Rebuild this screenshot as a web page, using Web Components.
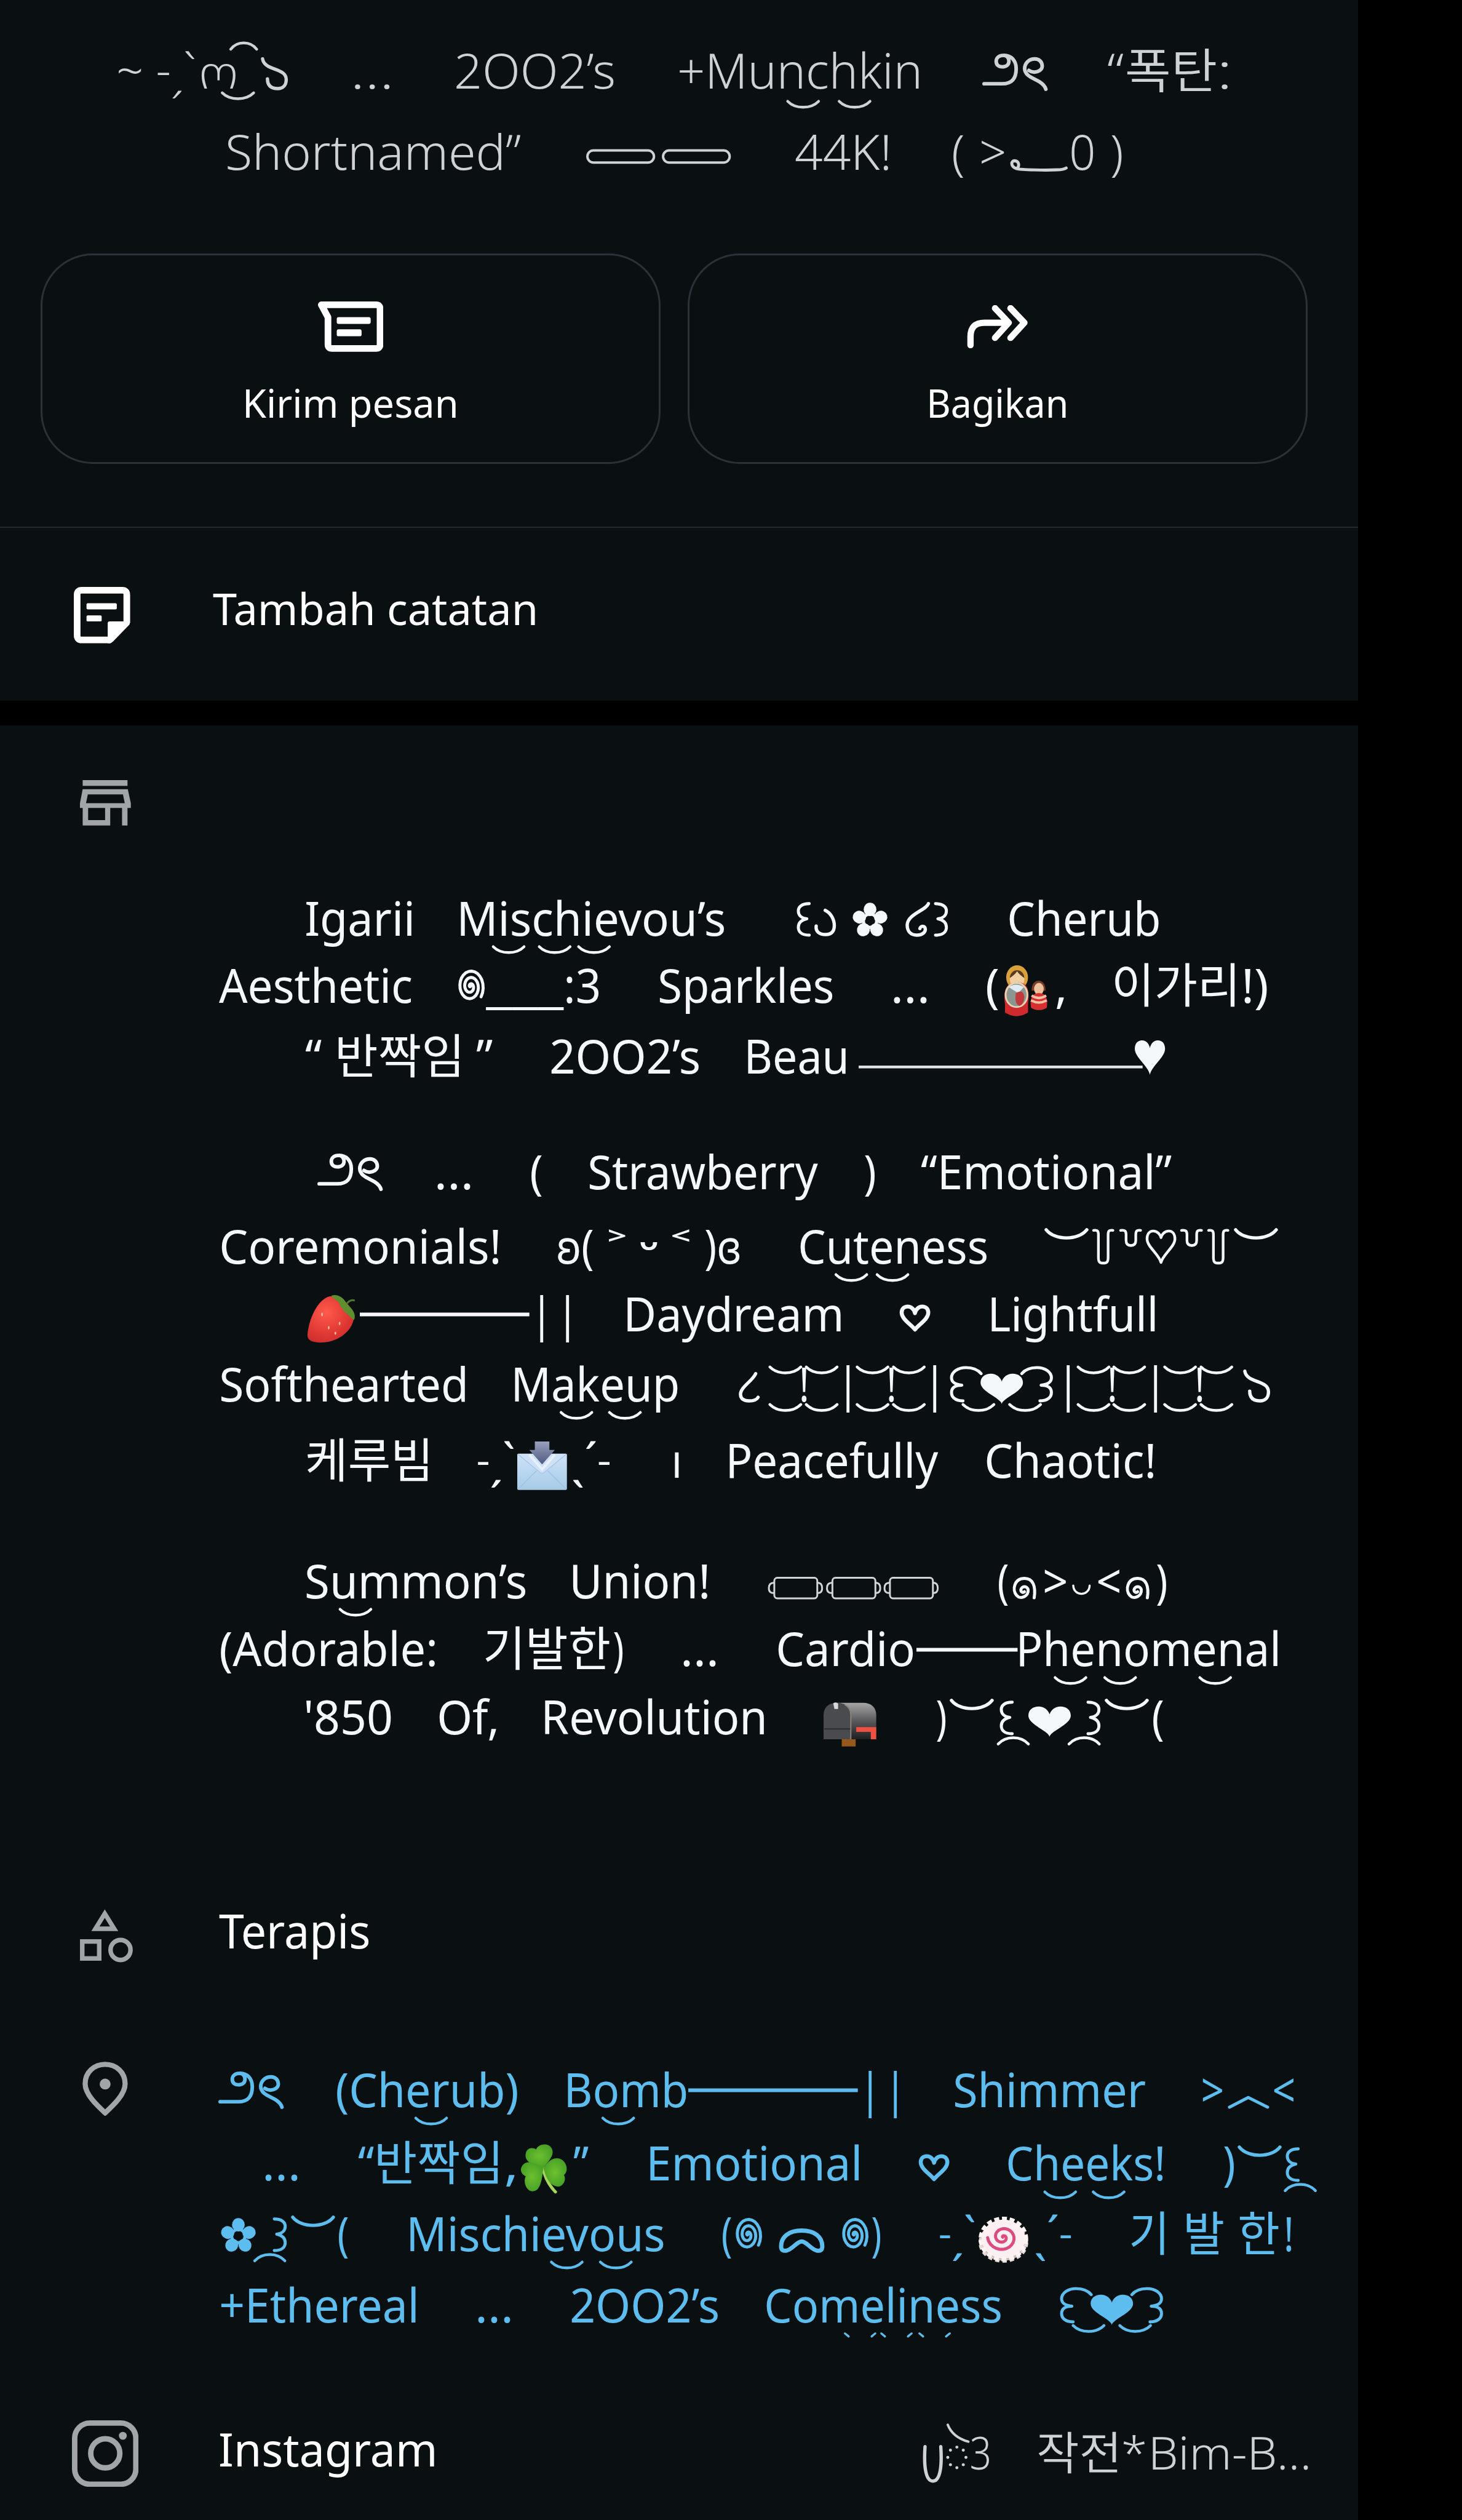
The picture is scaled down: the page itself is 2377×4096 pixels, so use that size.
<!DOCTYPE html>
<html lang="id">
<head>
<meta charset="utf-8">
<title>Info kontak</title>
<style>
    :root {
        /* one design unit */
        --u: 0.98467px;
    }
    html, body {
        margin: 0;
        background: #000;
    }
    body {
        font-family: "Noto Sans", "Noto Sans CJK KR", "DejaVu Sans", sans-serif;
        color: #f5f8fb;
        overflow: hidden;
    }
</style>
</head>
<body>

<profile-page>
    <profile-panel>
        <profile-bio>
            <text-line size="80" h="134" arcs="381:-66:cap:43 367:6:smile:52 1301:20 1386:20">
                <t-run at="196,233">~</t-run>
                <t-run at="260,321">˗ˏˋ</t-run>
                <t-run at="332,389">ო</t-run>
                <t-mark at="432,475" kind="hookR"></t-mark>
                <t-run at="586,644">...</t-run>
                <t-run at="754,1014">2OO2’s</t-run>
                <t-run at="1122,1517">+Munchkin</t-run>
                <t-mark at="1623,1730" kind="bow"></t-mark>
                <t-run at="1829,1855">“</t-run>
                <t-run at="1862,2008">폭탄</t-run>
                <t-run at="2017,2028">:</t-run>
            </text-line>
            <text-line size="80" h="134">
                <t-run at="376,860">Shortnamed”</t-run>
                <t-mark at="968,1207" kind="pills"></t-mark>
                <t-run at="1313,1467">44K!</t-run>
                <t-run at="1574,1591">(</t-run>
                <t-run at="1621,1658">&gt;</t-run>
                <t-mark at="1667,1762" kind="tail"></t-mark>
                <t-run at="1769,1805">0</t-run>
                <t-run at="1835,1852">)</t-run>
            </text-line>
        </profile-bio>

        <action-bar>
            <action-button icon="message" label="Kirim pesan" width="346"></action-button>
            <action-button icon="share" label="Bagikan" width="224"></action-button>
        </action-bar>

        <detail-row class="note">
            <row-icon slot="icon" name="note"></row-icon>
            <text-line size="72" h="150" origin="350">
                <t-run at="351.5,884">Tambah catatan</t-run>
            </text-line>
        </detail-row>
    </profile-panel>

    <profile-panel>
        <detail-row class="about">
            <row-icon slot="icon" name="store"></row-icon>
            <text-line size="78.5" h="111.4" origin="360" arcs="815:18 891:18 956:18">
                <t-run at="506,680">Igarii</t-run>
                <t-run at="761,1196">Mischievou’s</t-run>
                <t-mark at="1317,1337" kind="braceL"></t-mark>
                <t-mark at="1345,1380" kind="earL"></t-mark>
                <t-mark at="1408,1466" kind="flower"></t-mark>
                <t-mark at="1496,1534" kind="earR"></t-mark>
                <t-mark at="1544,1564" kind="braceR"></t-mark>
                <t-run at="1667,1914">Cherub</t-run>
            </text-line>
            <text-line size="78.5" h="117" origin="360">
                <t-run at="362,680">Aesthetic</t-run>
                <t-mark at="756,799" kind="spiral"></t-mark>
                <t-run at="801,931">___</t-run>
                <t-run at="935,988">:3</t-run>
                <t-run at="1089,1375">Sparkles</t-run>
                <t-run at="1476,1531">...</t-run>
                <t-run at="1630,1648">(</t-run>
                <t-mark at="1658,1732" kind="dolls"></t-mark>
                <t-run at="1745,1757">,</t-run>
                <t-run at="1841,2039">이가리</t-run>
                <t-run at="2055,2093">!)</t-run>
            </text-line>
            <text-line size="78.5" h="190" origin="360">
                <t-run at="504,531">“</t-run>
                <t-run at="559,759">반짝임</t-run>
                <t-run at="786,813">”</t-run>
                <t-run at="910,1154">2OO2’s</t-run>
                <t-run at="1235,1397">Beau</t-run>
                <t-mark at="1418,1887" kind="ruleLow"></t-mark>
                <t-mark at="1874,1924" kind="heartTall"></t-mark>
            </text-line>

            <text-line size="78.5" h="123" origin="360">
                <t-mark at="525,627" kind="bow"></t-mark>
                <t-run at="722,777">...</t-run>
                <t-run at="878,895">(</t-run>
                <t-run at="973,1351">Strawberry</t-run>
                <t-run at="1428,1445">)</t-run>
                <t-run at="1520,1934">“Emotional”</t-run>
            </text-line>
            <text-line size="78.5" h="112" origin="360" arcs="1381:18 1449:18">
                <t-run at="366,824">Coremonials!</t-run>
                <t-run at="921.5,979">ʚ(</t-run>
                <t-run class="bold low" at="1004,1033">˃</t-run>
                <t-run class="bold" at="1057,1085">ᵕ</t-run>
                <t-run class="bold low" at="1109,1139">˂</t-run>
                <t-run at="1165,1221">)ɞ</t-run>
                <t-run at="1321,1629">Cuteness</t-run>
                <t-mark at="1726,1797" kind="crescent"></t-mark>
                <t-mark at="1805,1839" kind="toothLong"></t-mark>
                <t-mark at="1849,1884" kind="toothShort"></t-mark>
                <t-mark at="1892,1942" kind="heartOutline"></t-mark>
                <t-mark at="1950,1985" kind="toothShort"></t-mark>
                <t-mark at="1995,2029" kind="toothLong"></t-mark>
                <t-mark at="2038,2109" kind="crescent"></t-mark>
            </text-line>
            <text-line size="78.5" h="116" origin="360">
                <t-mark at="507,587" kind="strawberry"></t-mark>
                <t-mark at="594,874" kind="rule"></t-mark>
                <t-run at="892,898">|</t-run>
                <t-run at="934.5,940.5">|</t-run>
                <t-run at="1036,1388">Daydream</t-run>
                <t-mark at="1486,1536" kind="heartSmall"></t-mark>
                <t-run at="1637,1907">Lightfull</t-run>
            </text-line>
            <text-line size="78.5" h="125.5" origin="360" arcs="927:18 1007:18 1272:-57 1332:-57 1416:-57 1476:-57 1781:-57 1840:-57 1924:-57 1984:-57 1272:5 1332:5 1416:5 1476:5 1781:5 1840:5 1924:5 1984:5">
                <t-run at="365,768">Softhearted</t-run>
                <t-run at="850,1119">Makeup</t-run>
                <t-mark at="1221,1253" kind="hook"></t-mark>
                <t-run at="1323,1332">!</t-run>
                <t-run at="1397,1403">|</t-run>
                <t-run at="1468,1477">!</t-run>
                <t-run at="1541,1547">|</t-run>
                <t-mark at="1570,1737" kind="butterfly"></t-mark>
                <t-run at="1761,1767">|</t-run>
                <t-run at="1832,1841">!</t-run>
                <t-run at="1905,1911">|</t-run>
                <t-run at="1976,1985">!</t-run>
                <t-mark at="2054,2096" kind="hookR"></t-mark>
            </text-line>
            <text-line size="78.5" h="199.5" origin="360">
                <t-run at="508,707">케루빔</t-run>
                <t-run at="789,848">˗ˏˋ</t-run>
                <t-mark at="854,936" kind="envelope"></t-mark>
                <t-run at="947,1007">ˎˊ˗</t-run>
                <t-run at="1114.5,1121.5">ı</t-run>
                <t-run at="1205,1550">Peacefully</t-run>
                <t-run at="1629,1905">Chaotic!</t-run>
            </text-line>

            <text-line size="78.5" h="112" origin="360" arcs="562:18">
                <t-run at="506,868">Summon’s</t-run>
                <t-run at="946,1169">Union!</t-run>
                <t-mark at="1268,1549" kind="frames"></t-mark>
                <t-run at="1649,1664">(</t-run>
                <t-mark at="1672,1712" kind="curl"></t-mark>
                <t-run at="1725,1761">&gt;</t-run>
                <t-mark at="1771,1801" kind="cup"></t-mark>
                <t-run at="1813,1849">&lt;</t-run>
                <t-mark at="1859,1899" kind="curl"></t-mark>
                <t-run at="1910,1926">)</t-run>
            </text-line>
            <text-line size="78.5" h="112" origin="360" arcs="1743:18 1825:18 1982:18">
                <t-run at="365,719">(Adorable:</t-run>
                <t-run at="801,1006">기발한</t-run>
                <t-run at="1014,1029">)</t-run>
                <t-run at="1128,1182">...</t-run>
                <t-run at="1285,1508">Cardio</t-run>
                <t-mark at="1513,1680" kind="rule"></t-mark>
                <t-run at="1684,2110">Phenomenal</t-run>
            </text-line>
            <text-line size="78.5" h="354.5" origin="360" arcs="1649:16:cap 1766:16:cap">
                <t-run at="506,646">'850</t-run>
                <t-run at="725,819">Of,</t-run>
                <t-run at="900,1262">Revolution</t-run>
                <t-mark at="1359,1448" kind="mailbox"></t-mark>
                <t-run at="1547,1562">)</t-run>
                <t-mark at="1569,1640" kind="crescent"></t-mark>
                <t-mark at="1652,1672" kind="braceL"></t-mark>
                <t-mark at="1698,1768" kind="heart"></t-mark>
                <t-mark at="1796,1816" kind="braceR"></t-mark>
                <t-mark at="1825,1896" kind="crescent"></t-mark>
                <t-run at="1904,1920">(</t-run>
            </text-line>
        </detail-row>

        <detail-row class="category">
            <row-icon slot="icon" name="category"></row-icon>
            <text-line size="77" h="261" origin="360">
                <t-run at="362,609">Terapis</t-run>
            </text-line>
        </detail-row>

        <detail-row class="address">
            <row-icon slot="icon" name="pin"></row-icon>
            <text-line size="78.5" h="121.5" origin="360" arcs="687:18 996:18">
                <t-mark at="362,464" kind="bow"></t-mark>
                <t-run at="557,855">(Cherub)</t-run>
                <t-run at="937,1133">Bomb</t-run>
                <t-mark at="1136,1416" kind="rule"></t-mark>
                <t-run at="1434,1440">|</t-run>
                <t-run at="1476,1482">|</t-run>
                <t-run at="1576,1891">Shimmer</t-run>
                <t-run at="1986,2019">&gt;</t-run>
                <t-mark at="2028,2095" kind="hat"></t-mark>
                <t-run at="2103,2136">&lt;</t-run>
            </text-line>
            <text-line size="78.5" h="116.6" origin="360" arcs="1726:18 1806:18 2123:16:cap">
                <t-run at="438,492">...</t-run>
                <t-run at="591,617">“</t-run>
                <t-run at="624,823">반짝임</t-run>
                <t-run at="836,850">,</t-run>
                <t-mark at="859,936" kind="clover"></t-mark>
                <t-run at="947,972">”</t-run>
                <t-run at="1074,1419">Emotional</t-run>
                <t-mark at="1517,1567" kind="heartSmall"></t-mark>
                <t-run at="1665,1921">Cheeks!</t-run>
                <t-run at="2021,2038">)</t-run>
                <t-mark at="2045,2115" kind="crescent"></t-mark>
                <t-mark at="2125,2145" kind="braceL"></t-mark>
            </text-line>
            <text-line size="78.5" h="117.4" origin="360" arcs="911:18 992:18 421:16:cap">
                <t-mark at="365,423" kind="flower"></t-mark>
                <t-mark at="452,472" kind="braceR"></t-mark>
                <t-mark at="481,552" kind="crescent"></t-mark>
                <t-run at="560,575">(</t-run>
                <t-run at="677,1095">Mischievous</t-run>
                <t-run at="1193,1207">(</t-run>
                <t-mark at="1214,1257" kind="spiral"></t-mark>
                <t-mark at="1287,1361" kind="mask"></t-mark>
                <t-mark at="1389,1432" kind="spiral"></t-mark>
                <t-run at="1440,1454">)</t-run>
                <t-run at="1552,1609">˗ˏˋ</t-run>
                <t-mark at="1616,1699" kind="naruto"></t-mark>
                <t-run at="1710,1768">ˎˊ˗</t-run>
                <t-run at="1868,1923">기</t-run>
                <t-run at="1959,2020">발</t-run>
                <t-run at="2048,2112">한</t-run>
                <t-run at="2124,2133">!</t-run>
            </text-line>
            <text-line size="78.5" h="238.5" origin="360" arcs="1396:18:tips 1456:18:tips 1519:18:tips">
                <t-run at="365,687">+Ethereal</t-run>
                <t-run at="789,843">...</t-run>
                <t-run at="944,1186">2OO2’s</t-run>
                <t-run at="1265,1652">Comeliness</t-run>
                <t-mark at="1752,1919" kind="butterfly"></t-mark>
            </text-line>
        </detail-row>

        <detail-row class="social">
            <row-icon slot="icon" name="instagram"></row-icon>
            <text-line size="76" h="169" origin="360">
                <t-run at="364,717">Instagram</t-run>
            </text-line>
            <text-line class="handle" size="75" h="160" origin="717">
                <t-mark at="1525,1555" kind="deepCup"></t-mark>
                <t-mark at="1562,1602" kind="dotted"></t-mark>
                <t-run at="1604,1634">3</t-run>
                <t-run at="1714,1845">작전</t-run>
                <t-run at="1855,1891">*</t-run>
                <t-run at="1903,2160">Bim-B...</t-run>
            </text-line>
        </detail-row>
    </profile-panel>
</profile-page>

<script>
const LEAD = 102

const u = (n) => `calc(${n} * var(--u))`

/* Spiral path, from the centre outwards */
function spiralPath(cx, cy, rx, ry, turns, start) {
    let d = ''
    const steps = Math.round(turns * 24)
    for (let i = 0; i <= steps; i++) {
        const t = i / steps
        const a = start + t * turns * Math.PI * 2
        d += `${i ? 'L' : 'M'}${(cx + Math.cos(a) * rx * t).toFixed(1)} ${(cy + Math.sin(a) * ry * t).toFixed(1)}`
    }
    return d
}

const line = (d, w = 5.5) => `<path d="${d}" fill="none" stroke="currentColor" stroke-width="${w}" stroke-linecap="round" stroke-linejoin="round"/>`
const mirror = (w, body) => `<g transform="translate(${w} 0) scale(-1 1)">${body}</g>`
const smile = (x, y, w = 51) => line(`M${x} ${y}C${x + w * .25} ${y + 13} ${x + w * .75} ${y + 13} ${x + w} ${y}`, 4.5)
const cap = (x, y, w = 50) => line(`M${x} ${y}C${x + w * .25} ${y - 14} ${x + w * .75} ${y - 14} ${x + w} ${y}`, 4.5)
const tips = (x, y, w = 50) => line(`M${x} ${y}L${x + 6} ${y + 5}M${x + w} ${y}L${x + w - 6} ${y + 5}`, 3.5)

const BRACE = line('M19-53C6-53 1-47 1-41C1-34 6-29 15-28C6-26 1-21 1-14C1-7 6-1 19-1', 5)
const HEART = '<path d="M35 4C33-6 0-16 0-31C0-41 8-46 17-46C26-46 33-40 35-33C37-40 44-46 53-46C62-46 70-41 70-31C70-16 37-6 35 4Z" fill="currentColor"/>'
const WING = line('M20-1C6-1 1-8 1-15C1-22 6-27 18-27C6-28 1-33 1-39C1-49 12-56 25-56C37-56 45-52 50-46', 5)
const FRAME = '<rect x="10" y="-34" width="71" height="34" rx="5"/><path d="M10-26Q1-26 1-17T10-9M81-26Q89-26 89-17T81-9"/>'

/* Ornaments. y = 0 is the baseline of the line */
const MARKS = {
    bow: () => line('M2-9H32C50-9 55-20 55-34C55-48 46-56 35-56C27-56 22-52 22-46C22-40 26-37 32-37C38-37 43-40 43-46C43-52 40-55 35-56', 6)
        + line('M76-31C85-25 98-30 98-38C98-46 92-50 86-50C76-50 69-43 69-34C69-22 84-18 94-12C100-8 103-4 104 0', 6),
    pills: () => '<g fill="none" stroke="currentColor" stroke-width="4"><rect x="2" y="-33" width="110" height="20" rx="10"/><rect x="127" y="-33" width="110" height="20" rx="10"/></g>',
    tail: () => line('M12-3C2-6 2-16 9-16C17-15 17-6 12-3C20-1 60 0 78-1C87-1 91-2 94-4', 5),
    braceL: () => BRACE,
    braceR: () => mirror(20, BRACE),
    earL: () => line('M18-42C27-38 33-27 33-17C33-6 27-2 19-2C8-2 2-7 3-16'),
    earR: () => line('M37-53C33-42 3-36 2-18C2-7 8-1 18-1C26-1 32-5 32-11C32-17 24-17 23-12'),
    flower: () => [0, 72, 144, 216, 288].map((a) => `<ellipse cx="29" cy="-43.5" rx="10.5" ry="11" transform="rotate(${a} 29 -25)" fill="currentColor"/>`).join('')
        + '<circle cx="29" cy="-25" r="11" fill="none" stroke="currentColor" stroke-width="5"/>',
    spiral: () => line(spiralPath(21, -27, 22, 29, 2.75, 2.2), 5),
    ruleLow: (w) => `<path d="M0-12H${w}" stroke="currentColor" stroke-width="4.5" opacity=".9"/>`,
    rule: (w) => `<path d="M0-28H${w}" stroke="currentColor" stroke-width="6"/>`,
    heartTall: () => '<path d="M25 1C22-14 0-28 0-42C0-51 5-56 12-56C19-56 24-50 25-43C26-50 31-56 38-56C45-56 50-51 50-42C50-28 28-14 25 1Z" fill="currentColor"/>',
    heartOutline: () => line('M25-2C22-15 2-28 2-41C2-49 6-54 12-54C19-54 24-48 25-43C26-48 31-54 38-54C44-54 48-49 48-41C48-28 28-15 25-2Z', 4.5),
    heartSmall: () => line('M25-3C18-12 3-20 3-31C3-37 7-41 13-41C19-41 24-36 25-30C26-36 31-41 37-41C43-41 47-37 47-31C47-20 32-12 25-3Z', 6.5),
    crescent: () => line('M2-56C16-38 55-38 69-56', 5.5),
    toothLong: () => line('M1-55C7-56 9-54 9-48V-10C9-2 12-1 17-1C22-1 25-2 25-10V-48C25-54 27-56 33-55', 4.4),
    toothShort: () => line('M1-55C8-56 10-54 10-48V-38C10-32 13-30 18-30C23-30 26-32 26-38V-48C26-54 28-56 34-55', 4.4),
    hook: () => line('M27-46C22-34 2-24 2-12C2-4 8-1 16-1C24-1 29-3 31-7'),
    hookR: () => line('M2-50C5-30 41-36 41-16C41-6 35-1 27-1C16-1 10-6 10-17'),
    butterfly: () => WING + mirror(167, WING) + `<g transform="translate(49 0)">${HEART}</g>` + smile(20, 5) + smile(97, 5),
    heart: () => HEART,
    frames: () => [0, 96, 191].map((x) => `<g transform="translate(${x} 0)" fill="none" stroke="currentColor" stroke-width="3" opacity=".85">${FRAME}</g>`).join(''),
    curl: () => line('M36-1C39-20 34-33 20-33C3-33-1-14 7-5C14 3 27-4 26-14C25-21 15-21 14-14C14-10 18-9 20-11', 5),
    cup: () => line('M1-21C2-3 27-3 28-21', 3.5),
    hat: () => line('M2 0L33-16L65 0', 5),
    mask: () => line('M3-8C3-24 16-34 37-34C58-34 71-24 71-8C71-1 67 0 62-1C52-3 45-16 37-16C29-16 22-3 12-1C7 0 3-1 3-8Z', 7),
    deepCup: () => line('M2-39C0-10 2 18 15 18C28 18 30-10 28-39', 5.5),
    dotted: () => [0, 45, 90, 135, 180, 225, 270, 315].map((a) => {
        const r = a * Math.PI / 180
        return `<circle cx="${18 + Math.cos(r) * 15}" cy="${-21 + Math.sin(r) * 17}" r="2.5" fill="currentColor"/>`
    }).join('') + line('M3-75C8-62 20-52 37-47', 4),

    strawberry: () => `
        <radialGradient id="g" cx=".4" cy=".35" r=".75"><stop offset="0" stop-color="#ff5a4c"/><stop offset=".6" stop-color="#e23a35"/><stop offset="1" stop-color="#c92a2c"/></radialGradient>
        <path d="M38-58C18-54 3-20 1 5C0 15 10 20 30 18C60 14 76-6 78-24C74-42 60-58 38-58Z" fill="url(#g)"/>
        <path d="M40-59C52-63 62-54 66-45C75-38 82-28 78-19C71-22 69-29 62-32C60-38 54-40 54-46C50-52 44-53 40-59Z" fill="#5d8f2f"/>
        <path d="M66-46Q72-53 79-51" fill="none" stroke="#4b7d2a" stroke-width="3"/>
        <g fill="#ffb39b"><ellipse cx="25" cy="-28" rx="1.5" ry="3"/><ellipse cx="54" cy="-13" rx="1.5" ry="3"/><ellipse cx="36" cy="-6" rx="1.5" ry="3"/><ellipse cx="47" cy="3" rx="1.5" ry="2.5"/></g>`,
    envelope: () => `
        <linearGradient id="g" x1="0" y1="0" x2="0" y2="1"><stop offset="0" stop-color="#cfe2f8"/><stop offset="1" stop-color="#a5cbe8"/></linearGradient>
        <linearGradient id="a" x1="0" y1="0" x2="0" y2="1"><stop offset="0" stop-color="#9aa0be"/><stop offset="1" stop-color="#505a80"/></linearGradient>
        <rect x="0" y="-40" width="82" height="60" rx="2" fill="url(#g)"/>
        <path d="M2 18L32-12M80 18L50-12" stroke="#9fc2e0" stroke-width="1.5"/>
        <path d="M1-39L36-10Q41-5 46-10L81-39" fill="#cfe1f7" stroke="#abc8e6" stroke-width="1.5"/>
        <path d="M20-38L41-14L62-38" fill="none" stroke="#e8f2fd" stroke-width="4"/>
        <path d="M29-60H53V-46H62L41-22L20-46H29Z" fill="url(#a)"/>`,
    mailbox: () => `
        <linearGradient id="g" x1="0" y1="0" x2="0" y2="1"><stop offset="0" stop-color="#a5a5a6"/><stop offset=".5" stop-color="#59595b"/><stop offset="1" stop-color="#1e1f21"/></linearGradient>
        <rect x="31" y="6" width="23" height="14" fill="#96591b"/>
        <path d="M20-52H66C80-52 88-44 88-32V8H44Z" fill="url(#g)"/>
        <path d="M1 8V-32C1-44 9-52 23-52C38-52 46-44 46-32V8Z" fill="#4a4b4e"/>
        <path d="M46 8V-32Q46-44 36-49" fill="none" stroke="#8d8377" stroke-width="2"/>
        <path d="M2-9H45" stroke="#2c2d30" stroke-width="2"/>
        <path d="M17-51Q20-54 25-51V-42H19Z" fill="#d9d9da"/>
        <path d="M55-12H88V8H79V-4H55Z" fill="#f0503f"/>`,
    clover: () => `
        <radialGradient id="g"><stop offset="0" stop-color="#6cc02f"/><stop offset="1" stop-color="#4aa326"/></radialGradient>
        <path d="M37-22Q42 2 58 18" fill="none" stroke="#a5d65a" stroke-width="5" stroke-linecap="round"/>
        <g fill="url(#g)">
            <path d="M38-22C20-26 6-32 9-46C11-55 21-56 26-52C30-62 46-63 51-55C58-44 48-34 38-22Z"/>
            <path d="M38-22C26-30 10-36 3-25C-2-17 3-10 9-8C4 2 10 17 20 17C34 17 36-4 38-22Z"/>
            <path d="M38-22C48-36 60-42 70-34C79-26 78-14 72-10C77-2 70 11 60 9C48 7 42-6 38-22Z"/>
        </g>`,
    naruto: () => `
        <ellipse cx="41" cy="-16" rx="38" ry="32" fill="#c9b9b4"/>
        <ellipse cx="41" cy="-14" rx="38" ry="30" fill="none" stroke="#e6dad6" stroke-width="6" stroke-dasharray="7 5"/>
        <ellipse cx="41" cy="-20" rx="36" ry="32" fill="#fbeff1"/>
        <ellipse cx="41" cy="-20" rx="37" ry="33" fill="none" stroke="#fdf3f3" stroke-width="8" stroke-dasharray="8 4.5"/>
        <path d="${spiralPath(40, -23, 25, 23, 1.9, 0.6 + Math.PI)}" fill="none" stroke="#dc4a80" stroke-width="5" stroke-linecap="round"/>`,
    dolls: () => `
        <ellipse cx="22" cy="-42" rx="18" ry="20" fill="#d8a13a"/>
        <ellipse cx="22" cy="-39" rx="12" ry="14" fill="#f0cfa2"/>
        <path d="M10-41C11-58 33-58 34-41Q26-46 22-52Q18-46 10-41Z" fill="#5d3a1c"/>
        <path d="M2 2C-2-26 8-34 22-34C36-34 44-26 40 2V16Q21 28 2 16Z" fill="#cf2a2e"/>
        <ellipse cx="21" cy="-13" rx="18" ry="20" fill="#8b9690" stroke="#e9d3b0" stroke-width="3"/>
        <path d="M8-26Q20-34 33-26L24-16Z" fill="#dfeaf4"/>
        <path d="M20-16Q32-24 34-10Q33 3 26 5Q17 2 20-16Z" fill="#c0393c"/>
        <path d="M46-20C45-42 70-42 69-20Z" fill="#7a3d2a"/>
        <ellipse cx="58" cy="-23" rx="8" ry="10" fill="#edc19b"/>
        <path d="M45 8C42-12 50-16 58-16C66-16 74-12 71 8Q58 16 45 8Z" fill="#d5302f"/>
        <path d="M46-12Q58-4 70-12M45-4Q58 3 71-4" fill="none" stroke="#f0bfa6" stroke-width="4"/>`
}

/* Row and button icons, each with its own viewBox */
const ICONS = {
    message: [108, 83, '<path d="M5.500 5.500H96Q102.500 5.500 102.500 12V71Q102.500 77.500 96 77.500H23Q16.500 77.500 16.500 71V26Z" fill="none" stroke="currentColor" stroke-width="11" stroke-linejoin="round"/><g fill="currentColor"><rect x="31" y="26" width="56" height="11" rx="3"/><rect x="31" y="46" width="41" height="11.500" rx="3"/></g>'],
    share: [101, 71, '<path d="M6 66V52Q6 29 29 29H68M46.500 5L69 29L46.500 54M72 5L95 29L72 54" fill="none" stroke="currentColor" stroke-width="10.500" stroke-linecap="round" stroke-linejoin="round"/>'],
    note: [93, 93, '<path d="M87.500 59V13Q87.500 5.500 80 5.500H13Q5.500 5.500 5.500 13V80Q5.500 87.500 13 87.500H60" fill="none" stroke="currentColor" stroke-width="11" /><path d="M93 58L92 62L65 90L61 93H56V60Q56 57 59 57H85Z" fill="currentColor"/><g fill="currentColor"><rect x="21" y="27" width="50" height="10" rx="2"/><rect x="21" y="47" width="25" height="10" rx="2"/></g>'],
    store: [84, 75, '<g fill="currentColor"><rect x="4.500" y="0" width="74" height="9.500"/><path fill-rule="evenodd" d="M4.500 15H79L84 38V46H78.500V75H69.500V46H50V75H4.500V46H0V38ZM13 23.500L10 38H74L71 23.500ZM13.500 46V66H41.500V46Z"/></g>'],
    category: [87, 88, '<g fill="none" stroke="currentColor" stroke-width="7.500"><path d="M41 7.500L56.500 32.500H25.500Z"/><rect x="3.800" y="53.500" width="28" height="28"/><circle cx="67" cy="67.500" r="16.500"/></g>'],
    pin: [75, 90, '<path d="M37.500 84.500C24 72 4.500 54 4.500 36.500C4.500 18 19 4.500 37.500 4.500S70.500 18 70.500 36.500C70.500 54 51 72 37.500 84.500Z" fill="none" stroke="currentColor" stroke-width="8.500"/><circle cx="37.500" cy="37" r="9" fill="currentColor"/>'],
    instagram: [110, 110, '<g fill="none" stroke="currentColor" stroke-width="9"><rect x="4.500" y="4.500" width="101" height="101" rx="25"/><circle cx="55" cy="54.500" r="24"/></g><circle cx="84" cy="25.500" r="6.500" fill="currentColor"/>']
}

function iconSvg(name) {
    const [w, h, body] = ICONS[name]
    return `<svg viewBox="0 0 ${w} ${h}" style="display:block;width:${u(w)};height:${u(h)}">${body}</svg>`
}

class ProfilePage extends HTMLElement {
    constructor() {
        super()
        this.attachShadow({ mode: 'open' })
        this.shadowRoot.innerHTML = `
            <style>
                :host {
                    display: flex;
                    flex-direction: column;
                    gap: calc(40 * var(--u));
                    width: calc(2242 * var(--u));
                    height: 4096px;
                    overflow: hidden;
                }
            </style>
            <slot></slot>
        `
    }
}

class ProfilePanel extends HTMLElement {
    constructor() {
        super()
        this.attachShadow({ mode: 'open' })
        this.shadowRoot.innerHTML = `
            <style>
                :host {
                    display: flex;
                    flex: none;
                    flex-direction: column;
                    background: #0a0f12;
                }
            </style>
            <slot></slot>
        `
    }
}

class ProfileBio extends HTMLElement {
    constructor() {
        super()
        this.attachShadow({ mode: 'open' })
        this.shadowRoot.innerHTML = `
            <style>
                :host {
                    display: block;
                    padding: calc(65 * var(--u)) 0 calc(85 * var(--u));
                    color: #cfd2d5;
                    font-weight: 350;
                }
            </style>
            <slot></slot>
        `
    }
}

class ActionBar extends HTMLElement {
    constructor() {
        super()
        this.attachShadow({ mode: 'open' })
        this.shadowRoot.innerHTML = `
            <style>
                :host {
                    display: grid;
                    grid-template-columns: 1fr 1fr;
                    gap: calc(45 * var(--u));
                    height: calc(348 * var(--u));
                    padding: 0 calc(83 * var(--u)) calc(103 * var(--u)) calc(67 * var(--u));
                    border-bottom: calc(3 * var(--u)) solid #22292e;
                }
            </style>
            <slot></slot>
        `
    }
}

class ActionButton extends HTMLElement {
    constructor() {
        super()
        this.attachShadow({ mode: 'open' })
    }

    connectedCallback() {
        this.shadowRoot.innerHTML = `
            <style>
                :host {
                    display: flex;
                    flex-direction: column;
                    align-items: center;
                    box-sizing: border-box;
                    border: calc(3.1 * var(--u)) solid #2b3237;
                    border-radius: calc(86 * var(--u));
                    color: #fff;
                }
                .icon {
                    display: flex;
                    align-items: center;
                    height: calc(83 * var(--u));
                    margin-top: calc(77 * var(--u));
                }
            </style>
            <div class="icon">${iconSvg(this.getAttribute('icon'))}</div>
            <text-line size="64" h="100" origin="0" style="margin-top:${u(33)}">
                <t-run at="0,${this.getAttribute('width')}">${this.getAttribute('label')}</t-run>
            </text-line>
        `
    }
}

class DetailRow extends HTMLElement {
    constructor() {
        super()
        this.attachShadow({ mode: 'open' })
        this.shadowRoot.innerHTML = `
            <style>
                :host {
                    display: grid;
                    grid-template-columns: calc(360 * var(--u)) 1fr;
                    --icon: #a2a5a8;
                    --icon-left: 132;
                    --icon-top: 0;
                }
                :host(.note) {
                    --icon: #fff;
                    --icon-left: 122;
                    --icon-top: 98;
                    grid-template-columns: calc(350 * var(--u)) 1fr;
                    height: calc(286 * var(--u));
                    color: #fff;
                }
                :host(.note) .content { padding-top: calc(83 * var(--u)); }
                :host(.about) { --icon-top: 91; }
                :host(.about) .content { padding-top: calc(266 * var(--u)); }
                :host(.category) { --icon-top: 16; color: #fff; }
                :host(.address) { --icon-left: 136; --icon-top: 6; color: #5dbdee; }
                :host(.social) { --icon-left: 119; --icon-top: 4; color: #fff; }
                :host(.social) .content { display: flex; }
                .icon {
                    color: var(--icon);
                    padding: calc(var(--icon-top) * var(--u)) 0 0 calc(var(--icon-left) * var(--u));
                }
                ::slotted(.handle) {
                    margin-top: calc(7 * var(--u));
                    color: #cfd2d5;
                    font-weight: 350;
                }
            </style>
            <div class="icon"><slot name="icon"></slot></div>
            <div class="content"><slot></slot></div>
        `
    }
}

class RowIcon extends HTMLElement {
    constructor() {
        super()
        this.attachShadow({ mode: 'open' })
    }

    connectedCallback() {
        this.shadowRoot.innerHTML = `
            <style>:host { display: block; }</style>
            ${iconSvg(this.getAttribute('name'))}
        `
    }
}

/* One line of text; arcs="x:y[:shape[:width]]" are the marks drawn over it */
class TextLine extends HTMLElement {
    constructor() {
        super()
        this.attachShadow({ mode: 'open' })
    }

    get origin() {
        return Number(this.getAttribute('origin') || 0)
    }

    get baseline() {
        return LEAD / 2 + Number(this.getAttribute('size')) * 0.388
    }

    connectedCallback() {
        const shapes = { smile, cap, tips }
        const arcs = (this.getAttribute('arcs') || '').split(' ').filter(Boolean).map((item) => {
            const [x, y, shape = 'smile', w] = item.split(':')
            return shapes[shape](Number(x) - this.origin, Number(y), w ? Number(w) : undefined)
        })
        this.shadowRoot.innerHTML = `
            <style>
                :host {
                    display: flex;
                    align-items: flex-start;
                    position: relative;
                    height: ${u(this.getAttribute('h'))};
                    font-size: ${u(this.getAttribute('size'))};
                    line-height: ${u(LEAD)};
                    white-space: nowrap;
                }
                .arcs {
                    position: absolute;
                    left: 0;
                    top: ${u(this.baseline)};
                    width: ${u(100)};
                    height: ${u(1)};
                    overflow: visible;
                }
            </style>
            <slot></slot>
            ${arcs.length ? `<svg class="arcs" viewBox="0 0 100 1">${arcs.join('')}</svg>` : ''}
        `
    }
}

/* An item that takes the span at="from,to" of its line */
class LineItem extends HTMLElement {
    constructor() {
        super()
        this.attachShadow({ mode: 'open' })
    }

    get span() {
        return this.getAttribute('at').split(',').map(Number)
    }

    get box() {
        const prev = this.previousElementSibling
        const from = prev ? prev.getAttribute('at').split(',').map(Number)[1] : this.parentElement.origin
        const [x0, x1] = this.span
        return `display: block; flex: none; width: ${u(x1 - x0)}; margin-left: ${u(x0 - from)};`
    }
}

const pen = document.createElement('canvas').getContext('2d')

class TextRun extends LineItem {
    connectedCallback() {
        this.shadowRoot.innerHTML = `
            <style>
                :host { ${this.box} }
                :host(.bold) { font-weight: 600; }
                :host(.low) { padding-top: ${u(6)}; }
                span { display: inline-block; transform-origin: 0 0; }
            </style>
            <span><slot></slot></span>
        `
        this._fit()
    }

    /**
     * Stretches the run so that its ink fills the box
     */
    _fit() {
        const css = getComputedStyle(this)
        pen.font = `${css.fontWeight} ${css.fontSize} ${css.fontFamily}`
        const ink = pen.measureText(this.textContent)
        const scale = parseFloat(css.width) / (ink.actualBoundingBoxLeft + ink.actualBoundingBoxRight)
        const shift = ink.actualBoundingBoxLeft * scale
        this.shadowRoot.querySelector('span').style.transform = `translateX(${shift}px) scaleX(${scale})`
    }
}

class TextMark extends LineItem {
    connectedCallback() {
        const [x0, x1] = this.span
        const w = x1 - x0
        this.shadowRoot.innerHTML = `
            <style>
                :host { ${this.box} }
                svg {
                    display: block;
                    width: ${u(w)};
                    height: ${u(1)};
                    margin-top: ${u(this.parentElement.baseline)};
                    overflow: visible;
                }
            </style>
            <svg viewBox="0 0 ${w} 1">${MARKS[this.getAttribute('kind')](w)}</svg>
        `
    }
}

customElements.define('profile-page', ProfilePage)
customElements.define('profile-panel', ProfilePanel)
customElements.define('profile-bio', ProfileBio)
customElements.define('action-bar', ActionBar)
customElements.define('detail-row', DetailRow)
customElements.define('row-icon', RowIcon)
customElements.define('text-line', TextLine)
customElements.define('t-run', TextRun)
customElements.define('t-mark', TextMark)
customElements.define('action-button', ActionButton)
</script>
</body>
</html>
